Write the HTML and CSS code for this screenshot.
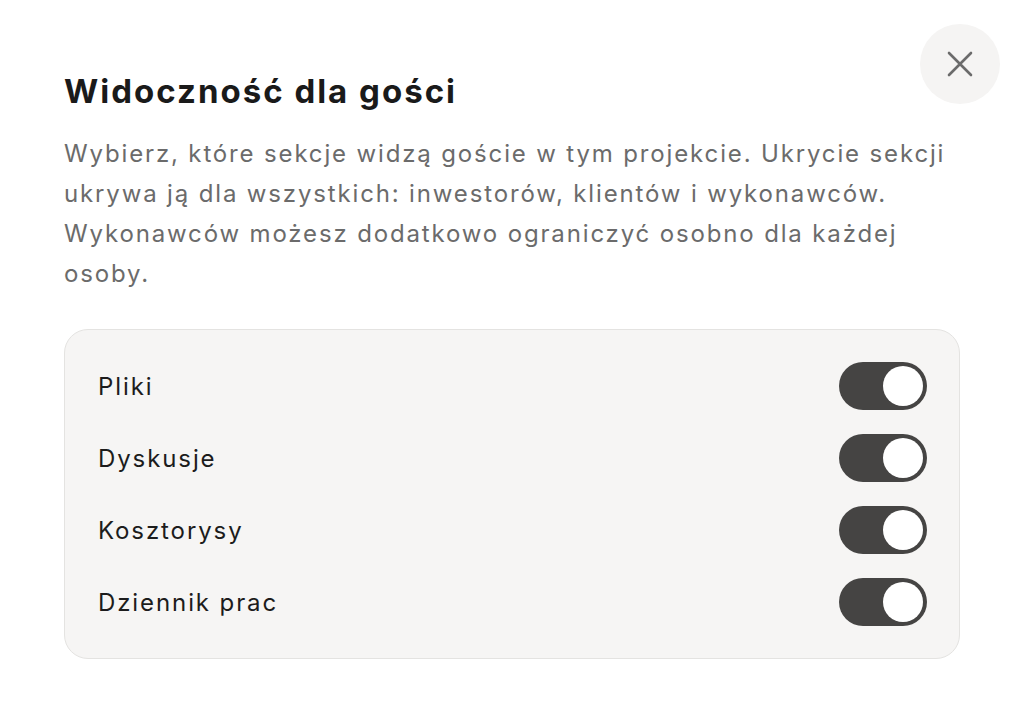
FILE: index.html
```html
<!DOCTYPE html>
<html lang="pl">
<head>
<meta charset="utf-8">
<link rel="stylesheet" href="styles.css">
</head>
<body>
<div class="modal">
  <button class="close" aria-label="Zamknij">
    <svg width="26" height="26" viewBox="0 0 26 26"><path d="M2 2 L24 24 M24 2 L2 24" stroke="#6b6b6b" stroke-width="2.6" stroke-linecap="round" fill="none"/></svg>
  </button>
  <h1 class="title">Widoczność dla gości</h1>
  <p class="desc">Wybierz, które sekcje widzą goście w tym projekcie. Ukrycie sekcji ukrywa ją dla wszystkich: inwestorów, klientów i wykonawców. Wykonawców możesz dodatkowo ograniczyć osobno dla każdej osoby.</p>
  <div class="card">
    <div class="row"><span class="label">Pliki</span><span class="toggle"><span class="knob"></span></span></div>
    <div class="row"><span class="label">Dyskusje</span><span class="toggle"><span class="knob"></span></span></div>
    <div class="row"><span class="label">Kosztorysy</span><span class="toggle"><span class="knob"></span></span></div>
    <div class="row"><span class="label">Dziennik prac</span><span class="toggle"><span class="knob"></span></span></div>
  </div>
</div>
</body>
</html>
```

FILE: styles.css
```css
* { box-sizing: border-box; }
html, body { margin: 0; padding: 0; background: #ffffff; }
body {
  font-family: Inter, "Noto Sans", sans-serif;
  width: 1024px;
  height: 724px;
  overflow: hidden;
}
.modal {
  position: relative;
  padding: 71px 64px 0 64px;
}
.close {
  position: absolute;
  top: 24px;
  right: 24px;
  width: 80px;
  height: 80px;
  border-radius: 50%;
  border: none;
  background: #f5f4f3;
  display: flex;
  align-items: center;
  justify-content: center;
  padding: 0;
}
.title {
  margin: 0;
  font-size: 33px;
  line-height: 40px;
  font-weight: 700;
  color: #1a1a1a;
  letter-spacing: 2px;
}
.desc {
  margin: 23px 0 0 0;
  font-size: 24px;
  line-height: 40px;
  color: #6b6b6b;
  width: 896px;
  letter-spacing: 1.85px;
}
.card {
  margin-top: 35px;
  width: 896px;
  background: #f6f5f4;
  border: 1px solid #e4e3e1;
  border-radius: 24px;
  padding: 32px;
  display: flex;
  flex-direction: column;
  gap: 24px;
}
.row {
  display: flex;
  align-items: center;
  justify-content: space-between;
  height: 48px;
}
.label {
  font-size: 24px;
  color: #1c1c1c;
  letter-spacing: 1.9px;
  padding-left: 1px;
}
.toggle {
  width: 88px;
  height: 48px;
  border-radius: 24px;
  background: #454443;
  display: flex;
  align-items: center;
  justify-content: flex-end;
  padding: 4px;
}
.knob {
  width: 40px;
  height: 40px;
  border-radius: 50%;
  background: #ffffff;
}
```
